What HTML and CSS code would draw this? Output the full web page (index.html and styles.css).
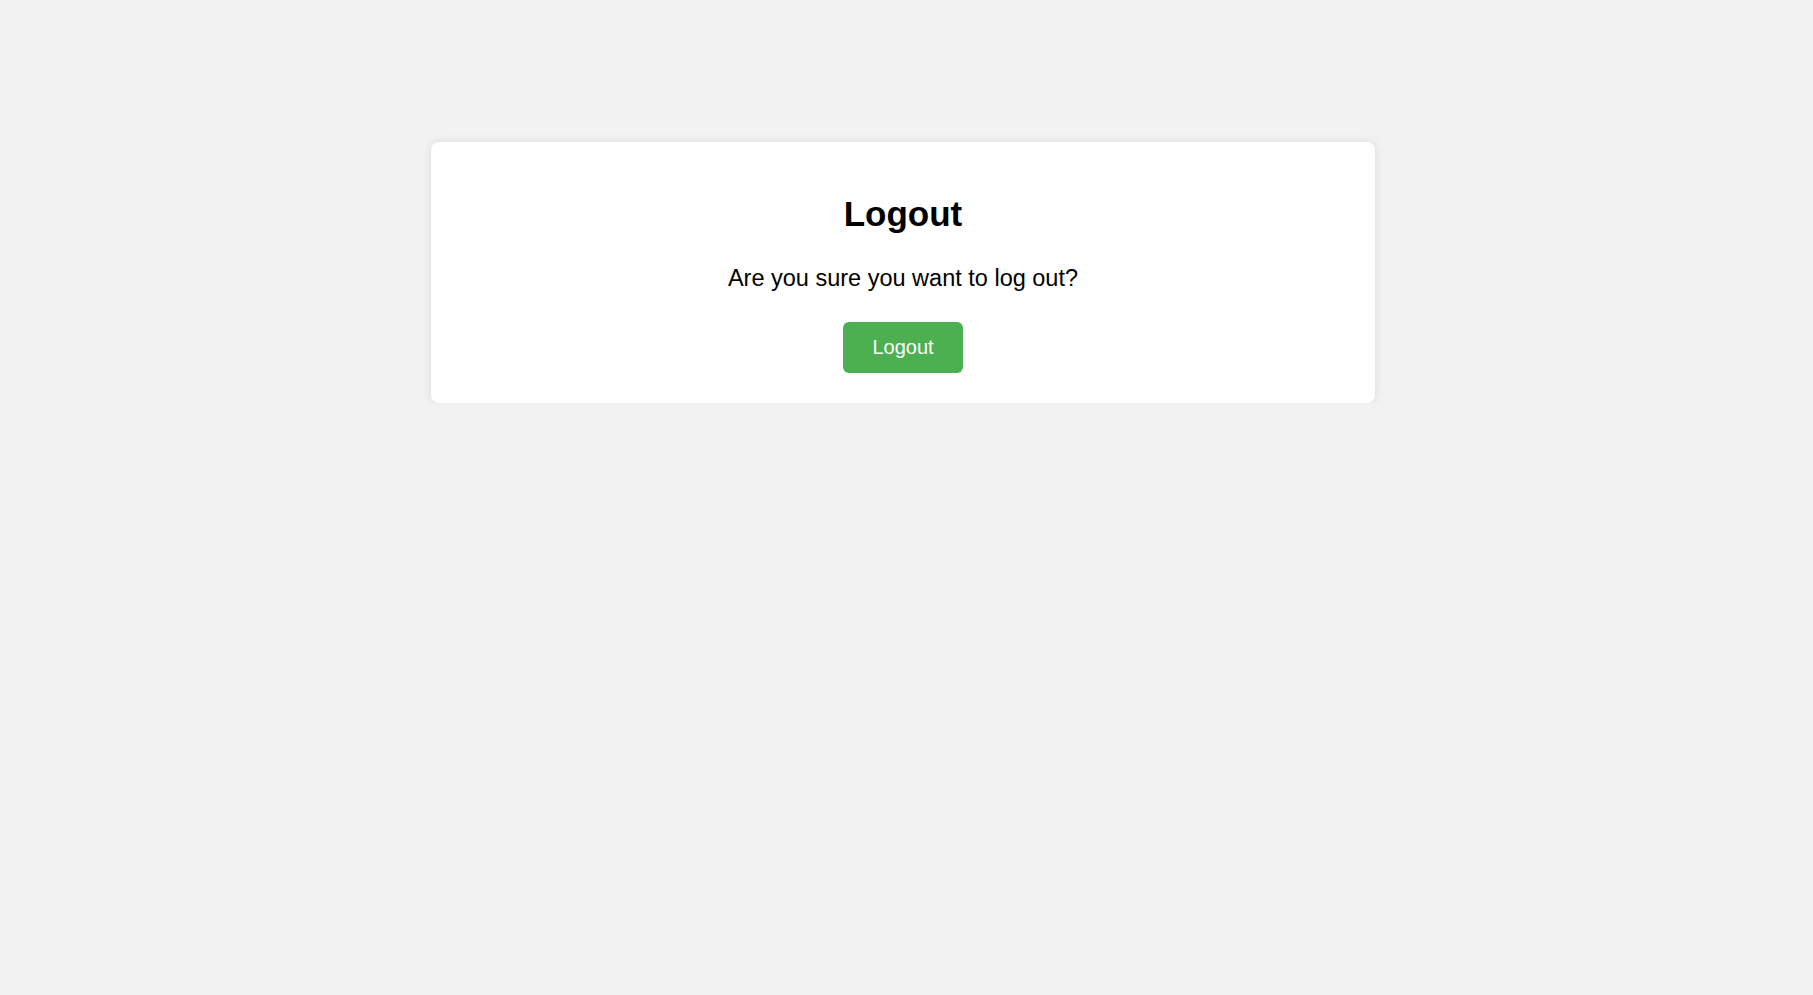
FILE: index.html
```html
<!DOCTYPE html>
<html lang="en">
<head>
<meta charset="utf-8">
<title>Logout</title>
<link rel="stylesheet" href="styles.css">
</head>
<body>
<div class="page">
  <div class="card">
    <h1 class="title">Logout</h1>
    <p class="message">Are you sure you want to log out?</p>
    <button class="btn" type="button">Logout</button>
  </div>
</div>
</body>
</html>
```
FILE: styles.css
```css
html, body {
  margin: 0;
  padding: 0;
  background: #f2f2f2;
  font-family: "Liberation Sans", Arial, sans-serif;
  color: #000;
}
.page {
  padding-top: 142px;
  padding-left: 431px;
}
.card {
  box-sizing: border-box;
  width: 944px;
  background: #fff;
  border-radius: 8px;
  box-shadow: 0 0 10px rgba(0, 0, 0, 0.1);
  padding: 30px;
  text-align: center;
  display: flex;
  flex-direction: column;
  align-items: center;
}
.title {
  font-size: 35px;
  font-weight: bold;
  margin: 22px 0 0;
  line-height: 40px;
}
.message {
  font-size: 23.5px;
  line-height: 27px;
  margin: 31px 0 0;
}
.btn {
  margin-top: 30px;
  background: #4caf50;
  color: #fff;
  border: none;
  border-radius: 6px;
  font-family: "Liberation Sans", Arial, sans-serif;
  font-size: 20px;
  height: 51px;
  width: 120px;
  padding: 0;
  cursor: pointer;
}
```
